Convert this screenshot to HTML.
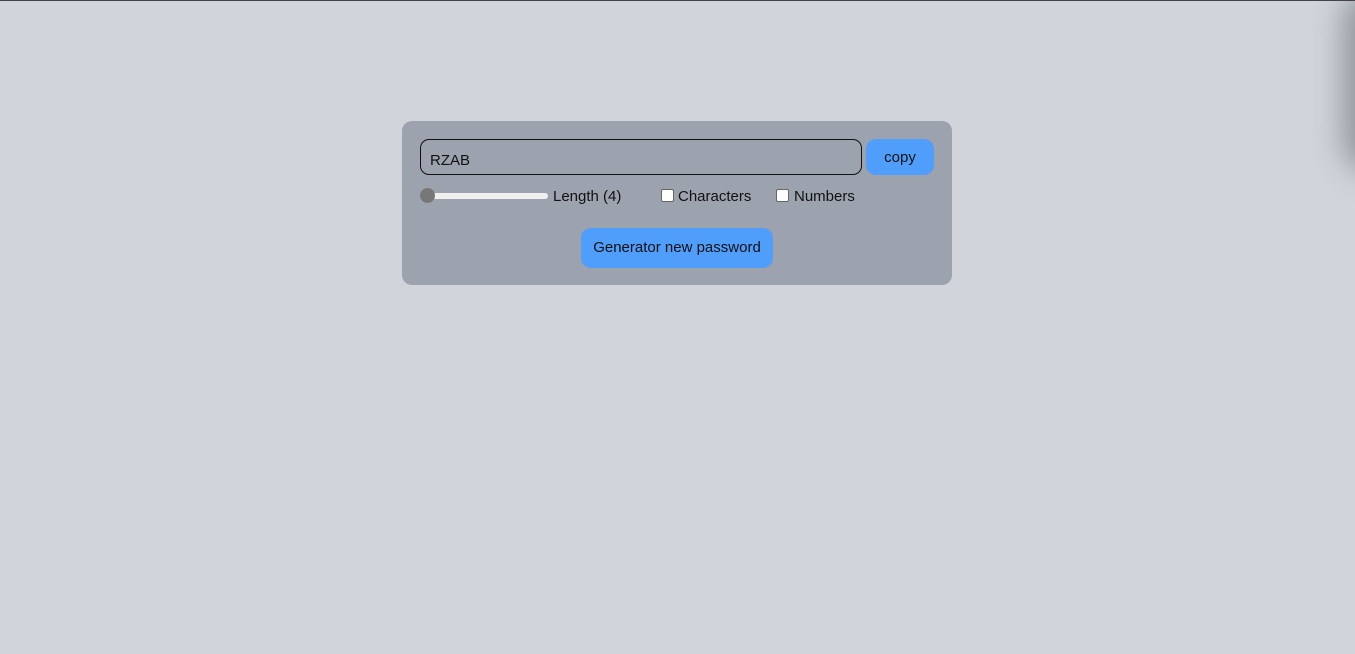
<!DOCTYPE html>
<html><head><style>
html,body{margin:0;padding:0}
body{width:1355px;height:654px;background:#d1d5db;position:relative;overflow:hidden;font-family:"Liberation Sans",sans-serif;font-size:15px;color:#111;border-top:1px solid #444;box-sizing:border-box}
.shadow{position:absolute;right:-40px;top:0px;width:40px;height:160px;border-radius:20px;box-shadow:0 0 30px 12px rgba(70,70,80,.45);background:#666}
.card{position:absolute;left:402px;top:120px;width:550px;height:164px;background:#9ca3af;border-radius:10px}
.inp{position:absolute;left:18px;top:18px;width:442px;height:36px;border:1px solid #111;border-radius:9px;box-sizing:border-box;padding-left:9px;padding-top:4px;line-height:34px;font-size:15px}
.copy{position:absolute;left:464px;top:18px;width:68px;height:36px;background:#4f9efc;border-radius:10px;text-align:center;line-height:38px}
.track{position:absolute;left:22px;top:72px;width:124px;height:6px;background:#f0f0f0;border-radius:3px}
.thumb{position:absolute;left:18px;top:67px;width:15px;height:15px;border-radius:50%;background:#777}
.t{position:absolute;top:67px;line-height:18px}
.cb{position:absolute;top:68px;width:11px;height:11px;background:#fff;border:1px solid #666;border-radius:2px}
.gen{position:absolute;left:179px;top:107px;width:192px;height:40px;background:#4f9efc;border-radius:10px;text-align:center;line-height:40px}
</style></head><body>
<div class="shadow"></div>
<div class="card">
<div class="inp">RZAB</div>
<div class="copy">copy</div>
<div class="track"></div><div class="thumb"></div>
<div class="t" style="left:151px">Length (4)</div>
<div class="cb" style="left:259px"></div>
<div class="t" style="left:276px">Characters</div>
<div class="cb" style="left:374px"></div>
<div class="t" style="left:392px">Numbers</div>
<div class="gen">Generator new password</div>
</div>
</body></html>
